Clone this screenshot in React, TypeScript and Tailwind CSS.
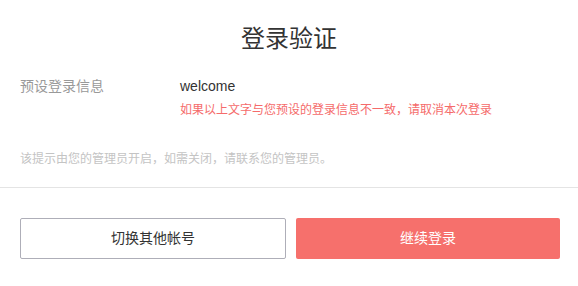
export default function App() {
  return (
    <div
      className="w-[578px] h-[286px] bg-white overflow-hidden"
      style={{ fontFamily: '"Liberation Sans", "Noto Sans CJK SC", sans-serif' }}
    >
      <div className="pt-[23px] h-[56px] text-center text-[24px] leading-8 text-[#333333]">登录验证</div>
      <div className="mt-5 px-5 flex">
        <div className="w-[160px] text-[14px] leading-5 text-[#999999]">预设登录信息</div>
        <div className="flex flex-col">
          <div className="text-[14px] leading-5 text-[#333333]">welcome</div>
          <div className="mt-1 text-[12px] leading-5 text-[#f56b6b]">如果以上文字与您预设的登录信息不一致，请取消本次登录</div>
        </div>
      </div>
      <div className="mt-[29px] px-5 text-[12px] leading-5 text-[#c4c4c4]">该提示由您的管理员开启，如需关闭，请联系您的管理员。</div>
      <div className="mt-[18px] border-t border-[#e4e4e4]" />
      <div className="mt-[30px] pl-5 flex gap-[10px] w-[560px]">
        <button className="flex-1 h-[41px] rounded-[2px] border border-[#aeaeb8] bg-white text-[14px] text-[#333333]">切换其他帐号</button>
        <button className="flex-1 h-[41px] rounded-[2px] bg-[#f6706c] text-[14px] text-white">继续登录</button>
      </div>
    </div>
  );
}
